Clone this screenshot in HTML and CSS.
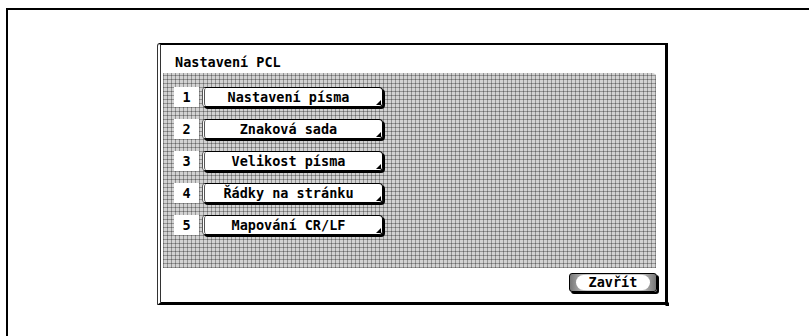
FILE: index.html
```html
<!DOCTYPE html>
<html lang="cs">
<head>
    <meta charset="UTF-8">
    <title>Nastavení PCL</title>
    <link rel="stylesheet" href="styles.css">
</head>
<body>
    <div class="screen">
        <div class="panel">
            <span class="corner corner-tr"></span>
            <div class="panel-title">Nastavení PCL</div>
            <div class="menu-area">
                <div class="menu-row">
                    <span class="num">1</span>
                    <button class="menu-btn">Nastavení písma</button>
                </div>
                <div class="menu-row">
                    <span class="num">2</span>
                    <button class="menu-btn">Znaková sada</button>
                </div>
                <div class="menu-row">
                    <span class="num">3</span>
                    <button class="menu-btn">Velikost písma</button>
                </div>
                <div class="menu-row">
                    <span class="num">4</span>
                    <button class="menu-btn">Řádky na stránku</button>
                </div>
                <div class="menu-row">
                    <span class="num">5</span>
                    <button class="menu-btn">Mapování CR/LF</button>
                </div>
            </div>
            <div class="panel-footer">
                <button class="close-btn"><span>Zavřít</span></button>
            </div>
            <span class="corner corner-br"></span>
        </div>
    </div>
</body>
</html>
```

FILE: styles.css
```css
body {
    margin: 0;
    background: #fff;
    overflow: hidden;
    font-family: "DejaVu Sans Mono", "Liberation Mono", monospace;
    font-weight: bold;
    color: #000;
}

.screen {
    margin: 8px 0 0 6px;
    width: 803px;
    height: 328px;
    border-top: 2px solid #000;
    border-left: 2px solid #000;
    padding: 33px 0 0 149px;
    box-sizing: border-box;
}

.panel {
    position: relative;
    width: 511px;
    height: 262px;
    box-sizing: border-box;
    border-top: 2px solid #000;
    border-right: 3px solid #000;
    border-bottom: 3px solid #000;
    border-left: 4px double #333;
    border-top-left-radius: 3px;
    display: flex;
    flex-direction: column;
}

.corner {
    position: absolute;
    width: 0;
    height: 0;
}

.corner-tr {
    top: -2px;
    right: -3px;
    border-top: 5px solid #000;
    border-left: 5px solid transparent;
}

.corner-br {
    bottom: -4px;
    right: -4px;
    border-bottom: 4px solid #000;
    border-left: 4px solid transparent;
}

.panel-title {
    font-size: 13.5px;
    line-height: 16px;
    padding: 9px 0 0 14px;
    height: 28px;
    box-sizing: border-box;
}

.menu-area {
    margin-left: 2px;
    width: 493px;
    height: 195px;
    box-sizing: border-box;
    padding: 14px 0 0 11px;
    display: flex;
    flex-direction: column;
    gap: 12px;
    background-color: #d2d2d2;
    background-image:
        repeating-linear-gradient(90deg, rgba(0, 0, 0, 0.3) 0 1px, transparent 1px 4px),
        repeating-linear-gradient(0deg, rgba(0, 0, 0, 0.3) 0 1px, transparent 1px 4px);
    border-top-right-radius: 4px;
}

.menu-row {
    display: flex;
    align-items: stretch;
    height: 20px;
    gap: 3px;
}

.num {
    width: 25px;
    background: #fff;
    font-size: 13.5px;
    line-height: 20px;
    text-align: center;
}

.menu-btn {
    position: relative;
    width: 181px;
    height: 20px;
    padding: 0 10px 0 0;
    font: inherit;
    font-size: 13.5px;
    line-height: 16px;
    background: #fff;
    color: #000;
    border: 1px solid #000;
    border-left: 3px double #555;
    border-radius: 4px;
    box-shadow: 2px 2px 0 #000;
    text-align: center;
}

.menu-btn::after {
    content: "";
    position: absolute;
    right: 1px;
    bottom: 1px;
    border-bottom: 5px solid #000;
    border-left: 5px solid transparent;
}

.panel-footer {
    display: flex;
    justify-content: flex-end;
    padding: 5px 8px 0 0;
}

.close-btn {
    width: 88px;
    height: 19px;
    padding: 1px 6px;
    font: inherit;
    font-size: 13.5px;
    color: #000;
    border: 1px solid #000;
    border-radius: 3px;
    box-shadow: 2px 2px 0 #000;
    background: linear-gradient(90deg, #777, #ccc 20%, #ccc 80%, #777);
    display: flex;
}

.close-btn span {
    flex: 1;
    background: #fff;
    border-radius: 8px;
    line-height: 15px;
    text-align: center;
}
```
